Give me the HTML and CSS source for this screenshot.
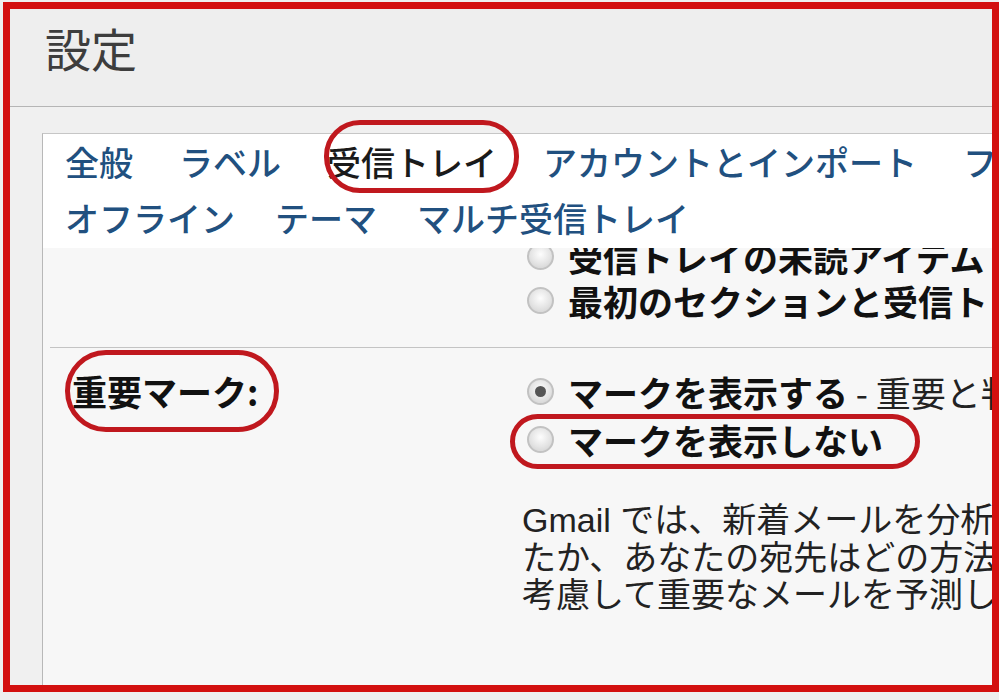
FILE: index.html
```html
<!DOCTYPE html>
<html lang="ja">
<head>
<meta charset="utf-8">
<title>設定</title>
<link rel="stylesheet" href="styles.css">
</head>
<body>
<div class="frame">
  <header class="header">
    <h1 class="title">設定</h1>
  </header>
  <div class="body">
    <div class="panel">
      <nav class="tabs">
        <div class="tab-row">
          <a class="tab">全般</a>
          <a class="tab">ラベル</a>
          <a class="tab tab-active circled-tab">受信トレイ</a>
          <a class="tab">アカウントとインポート</a>
          <a class="tab">フィルタ</a>
        </div>
        <div class="tab-row tab-row-2">
          <a class="tab">オフライン</a>
          <a class="tab">テーマ</a>
          <a class="tab">マルチ受信トレイ</a>
        </div>
      </nav>
      <div class="content">
        <section class="sec sec-first">
          <div class="options">
            <div class="option option-tight"><span class="radio"></span><span>受信トレイの未読アイテム</span></div>
            <div class="option option-tight"><span class="radio"></span><span>最初のセクションと受信トレイ</span></div>
          </div>
        </section>
        <section class="sec sec-important">
          <div class="label-col"><span class="label circled-label">重要マーク:</span></div>
          <div class="options">
            <div class="option"><span class="radio checked"></span><span>マークを表示する<span class="normal"> - 重要と判断されたメールにマークを付けます</span></span></div>
            <div class="option circled-option"><span class="radio"></span><span>マークを表示しない</span></div>
            <p class="desc">Gmail では、新着メールを分析して、以前に同様のメールを開いたか、返信し<br>たか、あなたの宛先はどの方法（To、Cc など）で指定されていたかなど<br>考慮して重要なメールを予測します。</p>
          </div>
        </section>
      </div>
    </div>
  </div>
</div>
</body>
</html>
```
FILE: styles.css
```css
* { box-sizing: border-box; }
html, body { margin: 0; padding: 0; }
body {
  width: 999px;
  height: 700px;
  overflow: hidden;
  background: #efefef;
  font-family: "Noto Sans CJK JP", sans-serif;
}
.frame {
  margin: 2px 0 0 3px;
  width: 996px;
  height: 690px;
  border: 7px solid #d3100f;
  display: flex;
  flex-direction: column;
  overflow: hidden;
  background: #f0f0f0;
}
.header {
  flex: none;
  height: 98px;
  padding: 8px 0 0 35px;
  background: #eeeeee;
  border-bottom: 1px solid #b5b5b5;
}
.title {
  margin: 0;
  font-size: 46px;
  line-height: 60px;
  font-weight: 400;
  color: #3d3d3d;
}
.body {
  flex: 1;
  min-height: 0;
  display: flex;
  padding: 26px 0 0 32px;
  background: #f0f0f0;
}
.panel {
  flex: 1;
  min-width: 0;
  display: flex;
  flex-direction: column;
  border-left: 1px solid #b8b8b8;
  border-top: 1px solid #c6c6c6;
}
.tabs {
  flex: none;
  background: #ffffff;
  padding: 0 0 2px 22px;
}
.tab-row {
  display: flex;
  gap: 46px;
  height: 56px;
  white-space: nowrap;
}
.tab-row-2 { gap: 40px; }
.tab {
  display: inline-block;
  position: relative;
  font-size: 34px;
  line-height: 56px;
  font-weight: 500;
  color: #21507f;
}
.tab-active { color: #1a1a1a; }
.circled-tab::after {
  content: "";
  position: absolute;
  left: -3px;
  right: -22px;
  top: -14px;
  bottom: -3px;
  border: 5px solid #c0181e;
  border-radius: 36px;
}
.content {
  flex: 1;
  min-height: 0;
  overflow: hidden;
  background: #f7f7f7;
  white-space: nowrap;
}
.sec-first {
  margin: -14px 0 0 7px;
  padding: 0 0 25px 477px;
  border-bottom: 1px solid #c4c4c4;
}
.sec-important {
  display: flex;
  padding-top: 19px;
}
.label-col {
  flex: none;
  width: 484px;
  padding-left: 29px;
}
.label {
  display: inline-block;
  position: relative;
  font-size: 35px;
  line-height: 48px;
  font-weight: 700;
  color: #111;
}
.circled-label::after {
  content: "";
  position: absolute;
  left: -7px;
  right: -21px;
  top: -17px;
  bottom: -17px;
  border: 5px solid #c0181e;
  border-radius: 42px;
}
.options { min-width: 0; }
.option {
  display: flex;
  align-items: center;
  gap: 14px;
  height: 48px;
  font-size: 35px;
  font-weight: 700;
  color: #111;
}
.option-tight { height: 44px; }
.normal { font-weight: 400; color: #222; }
.circled-option {
  position: relative;
  width: max-content;
}
.circled-option::after {
  content: "";
  position: absolute;
  left: -17px;
  right: -37px;
  top: -1px;
  bottom: -6px;
  border: 5px solid #c0181e;
  border-radius: 30px;
}
.radio {
  flex: none;
  position: relative;
  width: 27px;
  height: 27px;
  border-radius: 50%;
  border: 2px solid #c2c2c2;
  background: radial-gradient(circle at 50% 40%, #fdfdfd 0%, #e4e4e4 55%, #cdcdcd 100%);
}
.radio.checked::after {
  content: "";
  position: absolute;
  left: 6px;
  top: 6px;
  width: 11px;
  height: 11px;
  border-radius: 50%;
  background: #555;
}
.desc {
  margin: 39px 0 0 -5px;
  font-family: "Liberation Sans", "Noto Sans CJK JP", sans-serif;
  font-size: 34px;
  line-height: 37.5px;
  font-weight: 400;
  color: #222;
}
```
